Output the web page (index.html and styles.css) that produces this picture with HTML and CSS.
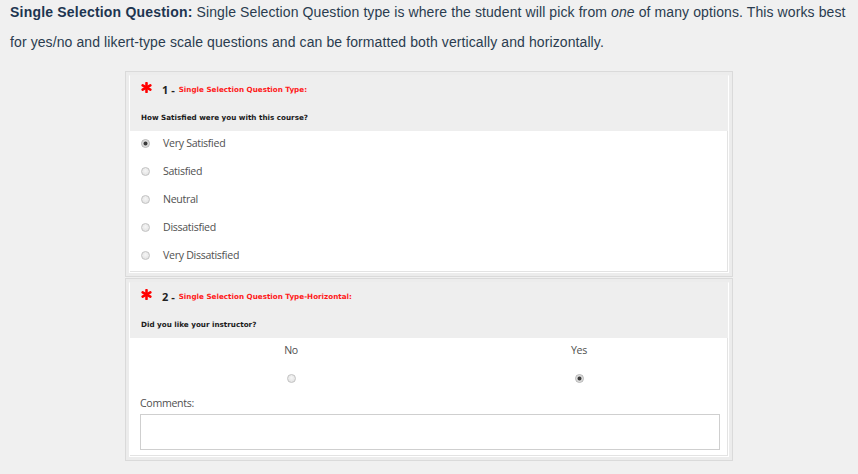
FILE: index.html
```html
<!DOCTYPE html>
<html>
<head>
<meta charset="utf-8">
<link rel="stylesheet" href="styles.css">
</head>
<body>
<div class="intro">
  <p class="intro-line"><strong>Single Selection Question:</strong> <span>Single Selection Question type is where the student will pick from</span> <em>one</em> <span>of many options. This works best</span></p>
  <p class="intro-line"><span>for yes/no and likert-type scale questions and can be formatted both vertically and horizontally.</span></p>
</div>

<div class="survey">
  <div class="question">
    <div class="q-inner">
      <div class="q-head">
        <div class="q-title">
          <svg class="req" viewBox="0 0 12 12" width="11" height="11"><g stroke="#ff0000" stroke-width="2.8" stroke-linecap="round"><line x1="6" y1="1.2" x2="6" y2="10.8"/><line x1="1.8" y1="3.6" x2="10.2" y2="8.4"/><line x1="1.8" y1="8.4" x2="10.2" y2="3.6"/></g></svg>
          <span class="q-num">1 -</span>
          <span class="q-type">Single Selection Question Type:</span>
        </div>
        <div class="q-text">How Satisfied were you with this course?</div>
      </div>
      <div class="q-body">
        <label class="option"><input type="radio" name="q1" checked><span>Very Satisfied</span></label>
        <label class="option"><input type="radio" name="q1"><span>Satisfied</span></label>
        <label class="option"><input type="radio" name="q1"><span>Neutral</span></label>
        <label class="option"><input type="radio" name="q1"><span>Dissatisfied</span></label>
        <label class="option"><input type="radio" name="q1"><span>Very Dissatisfied</span></label>
      </div>
    </div>
  </div>

  <div class="question">
    <div class="q-inner">
      <div class="q-head">
        <div class="q-title">
          <svg class="req" viewBox="0 0 12 12" width="11" height="11"><g stroke="#ff0000" stroke-width="2.8" stroke-linecap="round"><line x1="6" y1="1.2" x2="6" y2="10.8"/><line x1="1.8" y1="3.6" x2="10.2" y2="8.4"/><line x1="1.8" y1="8.4" x2="10.2" y2="3.6"/></g></svg>
          <span class="q-num">2 -</span>
          <span class="q-type">Single Selection Question Type-Horizontal:</span>
        </div>
        <div class="q-text">Did you like your instructor?</div>
      </div>
      <div class="q-body h-body">
        <div class="scale scale-labels">
          <span>No</span>
          <span>Yes</span>
        </div>
        <div class="scale scale-radios">
          <span><input type="radio" name="q2"></span>
          <span><input type="radio" name="q2" checked></span>
        </div>
        <div class="comments">
          <div class="comments-label">Comments:</div>
          <textarea class="comments-box"></textarea>
        </div>
      </div>
    </div>
  </div>
</div>
</body>
</html>
```

FILE: styles.css
```css
html, body {
  margin: 0;
  padding: 0;
  background: #f0f0f0;
}

body {
  font-family: "Liberation Sans", Arial, sans-serif;
}

.intro {
  padding: 0 10px;
  font-size: 14px;
  color: #2a3c4f;
}

.intro-line {
  margin: 0;
  height: 30px;
  line-height: 24px;
  white-space: nowrap;
  letter-spacing: 0.1px;
}

.intro-line strong {
  color: #1d3550;
  letter-spacing: 0.2px;
}

.survey {
  width: 608px;
  margin: 11px auto 0;
}

.question {
  border: 1px solid #dadada;
  padding: 3px;
  background: #ececec;
  margin-bottom: 1px;
}

.q-inner {
  border: 1px solid #ffffff;
  border-top-color: #eeeeee;
}

.q-head {
  background: #eeeeee;
  padding: 0 11px 5px;
}

.q-title {
  display: flex;
  align-items: center;
  height: 26px;
}

.req {
  display: block;
  margin-right: 10px;
  margin-top: -3px;
}

.q-num {
  font-family: "Open Sans", "DejaVu Sans", sans-serif;
  font-weight: 700;
  font-size: 11px;
  color: #222;
  margin-right: 4px;
}

.q-type {
  font-family: "DejaVu Sans", Verdana, sans-serif;
  font-weight: 700;
  font-size: 7.2px;
  color: #ff1a1a;
}

.q-text {
  margin-top: 8px;
  line-height: 16px;
  font-family: "DejaVu Sans", Verdana, sans-serif;
  font-weight: 700;
  font-size: 7.2px;
  color: #1a1a1a;
}

.q-body {
  background: #ffffff;
  border-right: 1px solid #e3e3e3;
  border-bottom: 1px solid #e3e3e3;
}

.option {
  display: flex;
  align-items: center;
  height: 24px;
  padding: 0 11px 4px;
  font-family: "Open Sans", "Noto Sans", sans-serif;
  font-size: 10.6px;
  letter-spacing: -0.3px;
  color: #505050;
}

input[type="radio"] {
  -webkit-appearance: none;
  appearance: none;
  width: 9px;
  height: 9px;
  margin: 0;
  border-radius: 50%;
  border: 1px solid #c2c2c2;
  background: radial-gradient(circle at 50% 40%, #f6f6f6 0%, #dedede 100%);
  box-sizing: border-box;
  display: inline-block;
  vertical-align: middle;
}

input[type="radio"]:checked {
  background: radial-gradient(circle, #3a3a3a 0, #3a3a3a 1.6px, #bcbcbc 2.2px, #e6e6e6 3.2px, #eeeeee 100%);
  border-color: #b4b4b4;
}

.option input[type="radio"] {
  margin: 0 13px 0 0;
}

.h-body {
  padding-bottom: 5px;
}

.scale {
  display: grid;
  grid-template-columns: 1fr 1fr;
  padding: 0 4px 0 17px;
  text-align: center;
  font-family: "Open Sans", "Noto Sans", sans-serif;
  font-size: 10.6px;
  letter-spacing: -0.3px;
  color: #505050;
}

.scale-labels {
  line-height: 24px;
}

.scale-radios {
  height: 32px;
  align-items: center;
}

.scale-radios span {
  display: flex;
  justify-content: center;
}

.comments {
  padding: 0 7px 0 10px;
}

.comments-label {
  font-family: "Open Sans", "Noto Sans", sans-serif;
  font-size: 10.6px;
  letter-spacing: -0.3px;
  color: #505050;
  line-height: 18px;
}

.comments-box {
  display: block;
  width: 100%;
  height: 36px;
  margin: 2px 0 0;
  border: 1px solid #cfcfcf;
  box-sizing: border-box;
  resize: none;
  background: #fff;
}
```
